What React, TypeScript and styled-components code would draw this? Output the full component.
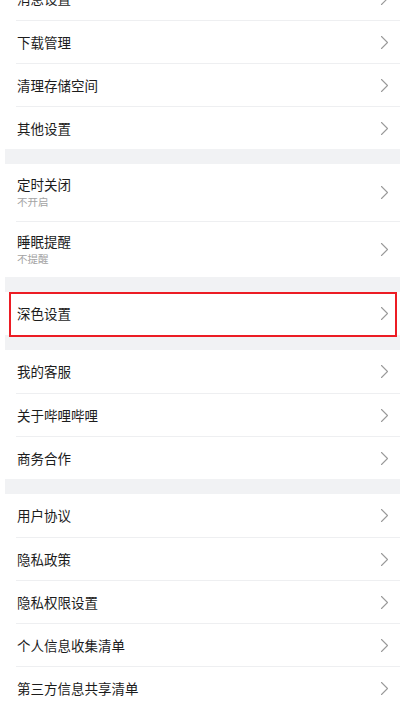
import React from 'react';
import styled, { createGlobalStyle } from 'styled-components';

const GlobalStyle = createGlobalStyle`
  html, body {
    margin: 0;
    padding: 0;
    background: #fff;
  }
  body {
    font-family: "Noto Sans CJK SC", "Noto Sans", sans-serif;
    overflow: hidden;
  }
`;

const Page = styled.div`
  width: 400px;
  height: 702px;
  overflow: hidden;
  background: #fff;
  > .scroller {
    margin-top: -23px;
  }
`;

const Group = styled.section`
  background: #fff;
  display: flex;
  flex-direction: column;
`;

const Gap = styled.div`
  height: 15px;
  margin-left: 5px;
  background: #f1f2f4;
`;

const Row = styled.div<{ $tall?: boolean; $marked?: boolean }>`
  position: relative;
  height: ${p => (p.$tall ? '56.5px' : '43px')};
  display: flex;
  align-items: center;
  justify-content: space-between;
  padding: 0 11px 0 17px;
  box-sizing: border-box;
  & + & {
    border-top: 1px solid #eeeff1;
    margin-left: 16px;
    padding-left: 1px;
  }
  ${p =>
    p.$marked &&
    `
    &::after {
      content: '';
      position: absolute;
      left: 9px;
      right: 3px;
      top: 0;
      bottom: -2px;
      border: 2px solid #ec1c24;
      pointer-events: none;
    }
  `}
`;

const Label = styled.div`
  display: flex;
  flex-direction: column;
  justify-content: center;
  > .title {
    font-size: 13.5px;
    line-height: 17px;
    color: #1c1c1c;
  }
  > .sub {
    font-size: 10.5px;
    line-height: 14px;
    margin-top: 2px;
    color: #a3a3a3;
  }
`;

const Chevron = () => (
  <svg width="9" height="15" viewBox="0 0 9 15" fill="none">
    <path d="M1.5 1.5 L7.5 7.5 L1.5 13.5" stroke="#9a9a9a" strokeWidth="1.1" strokeLinecap="round" strokeLinejoin="round" />
  </svg>
);

type Item = { title: string; sub?: string; marked?: boolean };

const groups: Item[][] = [
  [{ title: '消息设置' }, { title: '下载管理' }, { title: '清理存储空间' }, { title: '其他设置' }],
  [
    { title: '定时关闭', sub: '不开启' },
    { title: '睡眠提醒', sub: '不提醒' },
  ],
  [{ title: '深色设置', marked: true }],
  [{ title: '我的客服' }, { title: '关于哔哩哔哩' }, { title: '商务合作' }],
  [
    { title: '用户协议' },
    { title: '隐私政策' },
    { title: '隐私权限设置' },
    { title: '个人信息收集清单' },
    { title: '第三方信息共享清单' },
  ],
];

function App() {
  return (
    <Page>
      <GlobalStyle />
      <div className="scroller">
        {groups.map((items, gi) => (
          <React.Fragment key={gi}>
            {gi > 0 && <Gap />}
            <Group>
              {items.map(item => (
                <Row key={item.title} $tall={!!item.sub} $marked={item.marked}>
                  <Label>
                    <span className="title">{item.title}</span>
                    {item.sub && <span className="sub">{item.sub}</span>}
                  </Label>
                  <Chevron />
                </Row>
              ))}
            </Group>
          </React.Fragment>
        ))}
      </div>
    </Page>
  );
}

export default App;
